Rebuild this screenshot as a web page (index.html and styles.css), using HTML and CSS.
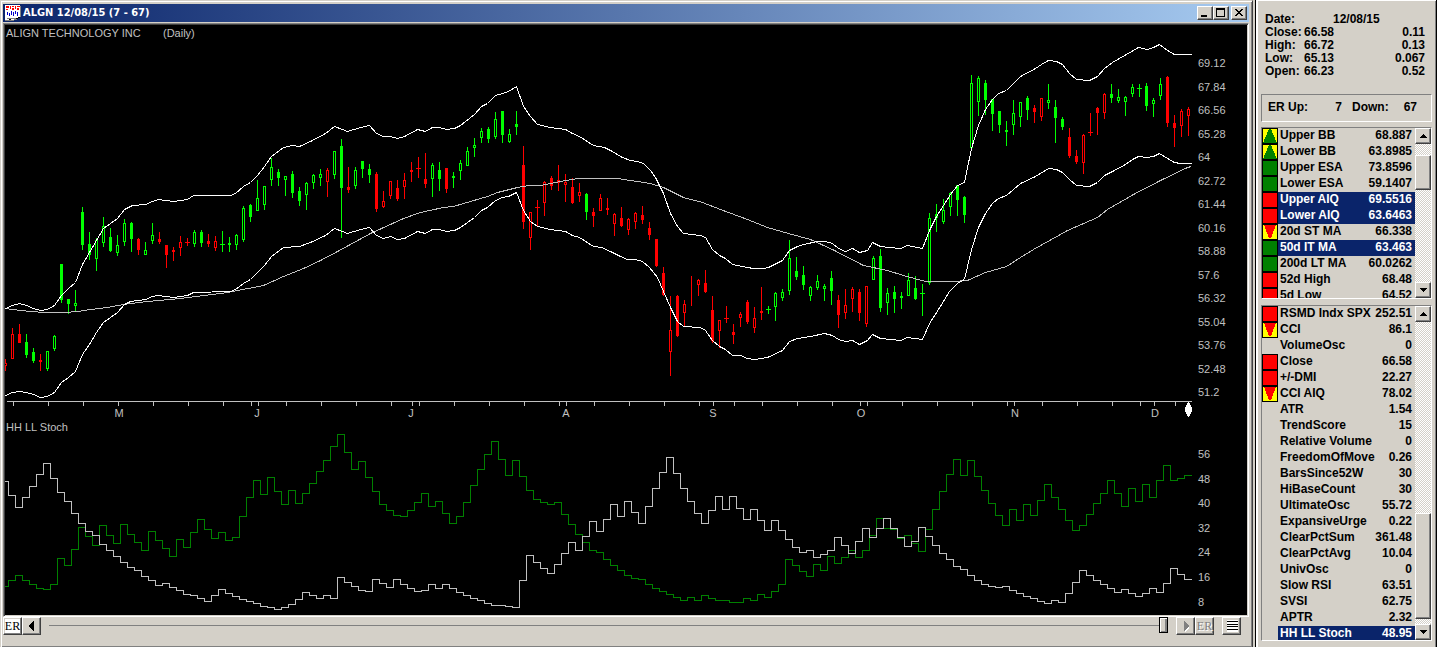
FILE: index.html
```html
<!DOCTYPE html>
<html lang="en">
<head>
<meta charset="utf-8">
<title>ALGN 12/08/15 (7 - 67)</title>
<link rel="stylesheet" href="styles.css">
</head>
<body>
<main class="window">
  <header class="titlebar">
    <svg class="app-icon" viewBox="0 0 16 16" aria-hidden="true">
      <path d="M0 0h15v13h-3l-2 2H0z" fill="#fff"/>
      <path d="M15 1h1v11h-1zM2 13h9v1H2zM9 14h3v1H9zM0 15h9v1H0z" fill="#808080"/>
      <path d="M1 1h3v2H1zM5 1h1v3H5zM7 1h2v1H7zM10 1h1v3h-1zM12 1h3v1h-3zM1 4h2v1H1zM7 3h2v2H7zM12 3h2v2h-2z" fill="#f00"/>
      <path d="M2 7h1v3H2zM4 8h1v3H4zM6 6h1v4H6zM8 7h1v4H8zM10 6h1v3h-1zM12 7h1v4h-1z" fill="#00c"/>
      <path d="M13 12h2v1h-2zM11 13h2v1h-2zM4 14h2v1H4z" fill="#000"/>
    </svg>
    <h1 class="title">ALGN 12/08/15 (7 - 67)</h1>
    <div class="caption-buttons">
      <button class="caption" aria-label="Minimize"><svg viewBox="0 0 12 10"><path d="M2 7h6v2H2z"/></svg></button>
      <button class="caption" aria-label="Maximize"><svg viewBox="0 0 12 10"><path d="M1 0h9v9H1zM2 2v6h7V2z" fill-rule="evenodd"/></svg></button>
      <button class="caption caption-close" aria-label="Close"><svg viewBox="0 0 12 10"><path d="M2 1h2v1h1v1h2V2h1V1h2v1H9v1H8v1H7v1h1v1h1v1h1v1H8V7H7V6H5v1H4v1H2V7h1V6h1V5h1V4H4V3H3V2H2z"/></svg></button>
    </div>
  </header>

  <section class="chart" aria-label="Price chart">
    <svg id="plot" class="plot" viewBox="5 25 1242 590" preserveAspectRatio="xMinYMin meet">
      <g id="candles" class="crisp"></g>
      <g id="averages" class="crisp"></g>
      <g id="stoch" class="crisp"></g>
      <g id="axis" class="axis crisp"></g>
      <path class="marker crisp" d="M1188 402h1l3 6v3l-3 6h-1l-3-6v-3z"/>
      <text class="label" x="6" y="37">ALIGN TECHNOLOGY INC</text>
      <text class="label" x="163" y="37">(Daily)</text>
      <text class="label" x="6" y="431">HH LL Stoch</text>
    </svg>
  </section>

  <footer class="toolbar">
    <button class="tool"><span class="er">ER</span></button>
    <button class="tool" aria-label="Previous"><svg viewBox="0 0 14 14"><path d="M4 6h1V5h1V4h1V3h1V2h1v10H8v-1H7v-1H6V9H5V8H4z"/></svg></button>
    <input class="slider" type="range" min="0" max="169" value="169" aria-label="Chart date">
    <button class="tool" aria-label="Next" disabled><svg viewBox="0 0 14 14"><path d="M6 3v10l1-1 1-1 1-1 1-1V8z" fill="#fff"/><path d="M5 2v10h1v-1h1v-1h1V9h1V8h1V6H9V5H8V4H7V3H6V2z" fill="#808080"/></svg></button>
    <button class="tool" disabled><span class="er er-off">ER</span></button>
    <button class="tool tool-list" aria-label="List"><svg viewBox="0 0 14 14"><path d="M2 1h11v12H2z" fill="#fff"/><path d="M2 2h11v1H2zM2 5h11v1H2zM2 7h11v1H2zM2 10h11v1H2z"/></svg></button>
  </footer>
</main>

<aside class="side">
  <table class="quote">
    <tr><th>Date:</th><td class="quote-date" colspan="2">12/08/15</td></tr>
    <tr><th>Close:</th><td>66.58</td><td class="num">0.11</td></tr>
    <tr><th>High:</th><td>66.72</td><td class="num">0.13</td></tr>
    <tr><th>Low:</th><td>65.13</td><td class="num">0.067</td></tr>
    <tr><th>Open:</th><td>66.23</td><td class="num">0.52</td></tr>
  </table>

  <div class="rating">
    <span>ER Up:</span><span class="rating-up">7</span>
    <span class="rating-name">Down:</span><span class="rating-down">67</span>
  </div>

  <section class="list list-short" aria-label="Price indicators">
    <div class="list-view"><table class="rows" id="price-list"></table></div>
    <div class="scrollbar">
      <button class="scroll-arrow" aria-label="Scroll up"><svg viewBox="0 0 12 12"><path d="M6 4h1v1h1v1h1v1h1v1H3V7h1V6h1V5h1z"/></svg></button>
      <div class="scroll-track"><div class="scroll-thumb thumb-top"></div></div>
      <button class="scroll-arrow" aria-label="Scroll down"><svg viewBox="0 0 12 12"><path d="M3 4h7v1H9v1H8v1H7v1H6V7H5V6H4V5H3z"/></svg></button>
    </div>
  </section>

  <section class="list list-long" aria-label="Technical indicators">
    <div class="list-view"><table class="rows" id="tech-list"></table></div>
    <div class="scrollbar">
      <button class="scroll-arrow" aria-label="Scroll up"><svg viewBox="0 0 12 12"><path d="M6 4h1v1h1v1h1v1h1v1H3V7h1V6h1V5h1z"/></svg></button>
      <div class="scroll-track"><div class="scroll-thumb thumb-bottom"></div></div>
      <button class="scroll-arrow" aria-label="Scroll down"><svg viewBox="0 0 12 12"><path d="M3 4h7v1H9v1H8v1H7v1H6V7H5V6H4V5H3z"/></svg></button>
    </div>
  </section>
</aside>
<script src="chart.js"></script>
</body>
</html>
```
FILE: styles.css
```css
* { box-sizing: border-box; }

body {
  margin: 0;
  min-height: 100vh;
  display: flex;
  background: #d4d0c8;
  color: #000;
  font: 12px/16px "Liberation Sans", Arial, sans-serif;
}

button {
  margin: 0;
  padding: 0;
  border: 1px solid;
  border-color: #fff #404040 #404040 #fff;
  box-shadow: inset -1px -1px #808080;
  background: #d4d0c8;
  font: inherit;
  display: flex;
  align-items: center;
  justify-content: center;
}

svg { display: block; shape-rendering: crispEdges; }

/* Chart window */
.window {
  flex: 1;
  min-width: 0;
  display: flex;
  flex-direction: column;
  padding: 2px 2px 0 2px;
  border: 1px solid;
  border-color: #d4d0c8 #404040 #404040 #d4d0c8;
  box-shadow: inset 1px 1px #fff, inset -1px -1px #808080;
}

.titlebar {
  display: flex;
  align-items: center;
  height: 18px;
  margin: 1px 1px 0 0;
  padding: 0 2px;
  background: linear-gradient(to right, #0a246a, #a6caf0);
}

.app-icon { width: 16px; height: 16px; }

.title {
  flex: 1;
  margin: 0 0 0 2px;
  color: #fff;
  font: bold 11px/18px "DejaVu Sans Condensed", Tahoma, sans-serif;
}

.caption-buttons { display: flex; }
.caption { width: 16px; height: 14px; }
.caption svg { width: 12px; height: 10px; }
.caption-close { margin-left: 2px; }

.chart {
  flex: 1;
  min-height: 0;
  margin: 1px 1px 0 0;
  border: 1px solid;
  border-color: #808080 #fff #fff #808080;
  box-shadow: inset 1px 1px #404040, inset -1px -1px #d4d0c8;
  padding: 1px;
  background: #000;
}

.plot { width: 100%; height: 100%; }
.plot .crisp { shape-rendering: crispEdges; }
.label { fill: #c0c0c0; font-size: 11px; }
.label-mid { text-anchor: middle; }
.axis path { stroke: #c0c0c0; fill: none; }
.marker { fill: #fff; }
.band, .average, .step { fill: none; stroke-width: 1; }
.band { stroke: #fff; }
.average { stroke: #c0c0c0; }
.step-low { stroke: #c0c0c0; }
.step-high { stroke: #008000; }
.bar-g { fill: #0f0; stroke: none; }
.bar-r { fill: #f00; stroke: none; }
.hollow { fill: #000; stroke-width: 1; }
.hollow-g { stroke: #0f0; }
.hollow-r { stroke: #f00; }

/* Bottom controls */
.toolbar {
  flex: none;
  display: flex;
  align-items: flex-start;
  height: 30px;
  padding-right: 9px;
}

.tool { width: 19px; height: 18px; flex: none; }
.tool svg { width: 14px; height: 14px; }
.tool-list { margin-left: 8px; }
.er { font: 12px/14px "Liberation Serif", serif; background: #fff; color: #000; }
.er-off { background: none; color: #808080; text-shadow: 1px 1px #fff; }

.slider {
  -webkit-appearance: none;
  appearance: none;
  flex: 1;
  min-width: 0;
  height: 16px;
  margin: 0 8px;
  background: linear-gradient(#808080, #808080) center / 100% 1px no-repeat;
}

.slider::-webkit-slider-thumb {
  -webkit-appearance: none;
  appearance: none;
  width: 9px;
  height: 16px;
  border: 1px solid #000;
  box-shadow: inset 1px 1px #fff, inset -2px -1px #808080;
  background: #d4d0c8;
}

/* Side panel */
.side {
  flex: none;
  width: 182px;
  margin-left: 2px;
  padding: 13px 4px 0 4px;
  border: solid #000;
  border-width: 0 1px;
  box-shadow: inset 2px 1px #fff, inset -1px -1px #808080;
  font-weight: bold;
}

table { border-collapse: collapse; border-spacing: 0; width: 100%; }
td, th { padding: 0; text-align: left; }

.quote { line-height: 13px; margin-left: 5px; width: 160px; }
.quote th { width: 39px; }
.quote .quote-date { padding-left: 29px; }
.num { text-align: right; }

.rating {
  display: flex;
  height: 28px;
  margin: 16px 0 5px 1px;
  padding: 4px 14px 0 6px;
  border: 1px solid;
  border-color: #808080 #fff #fff #808080;
}

.rating-up { width: 34px; text-align: right; }
.rating-name { margin-left: 10px; }
.rating-down { flex: 1; text-align: right; }

.list {
  display: flex;
  margin: 0 0 6px 1px;
  border: 1px solid;
  border-color: #808080 #fff #fff #808080;
}

.list-short { height: 172px; }
.list-long { height: 336px; }
.list-view { flex: 1; min-width: 0; overflow: hidden; }
.rows td { height: 16px; line-height: 14px; white-space: nowrap; vertical-align: top; }
.rows .cell-signal { width: 16px; }
.rows .cell-name { width: 100%; max-width: 0; padding-left: 2px; overflow: hidden; }
.rows .cell-value { padding-right: 3px; text-align: right; }
.selected .cell-name, .selected .cell-value { background: #0a246a; color: #fff; }
.signal { width: 16px; height: 16px; }

.scrollbar { flex: none; width: 16px; display: flex; flex-direction: column; }
.scroll-arrow { width: 16px; height: 16px; flex: none; }
.scroll-arrow svg { width: 12px; height: 12px; }

.scroll-track {
  flex: 1;
  display: flex;
  flex-direction: column;
  background: repeating-conic-gradient(#fff 0 25%, #d4d0c8 0 50%) 0 0 / 2px 2px;
}

.scroll-thumb {
  border: 1px solid;
  border-color: #fff #404040 #404040 #fff;
  box-shadow: inset -1px -1px #808080;
  background: #d4d0c8;
}

.thumb-top { height: 35px; margin-top: 11px; }
.thumb-bottom { height: 106px; margin: auto 0 5px; }
```
FILE: chart.js
```js
const STEP = 7;
const FIRST = 5;
const NS = "http://www.w3.org/2000/svg";

// high, body top, body bottom, low, colour (capital letter = filled body)
const candles = `
359 363 366 371 r,328 334 359 359 r,324 334 343 343 R,334 342 355 358 G,348 352 361 363 G,354 360 362 371 R,351 351 369 371 g,335 336 349 351 g,264 264 300 303 G,299 299 304 314 G,
290 303 306 311 g,207 212 245 250 G,232 244 255 260 G,238 240 259 271 g,217 226 243 247 g,228 237 251 252 G,235 245 253 256 g,219 223 242 246 g,222 223 239 252 G,238 239 250 255 R,
242 250 255 255 g,223 235 241 244 g,232 239 242 244 R,245 245 255 268 R,247 250 252 261 R,236 242 248 256 r,238 242 243 246 R,230 232 244 247 g,230 232 243 247 G,234 241 244 247 R,
236 241 248 251 r,231 244 245 252 G,237 243 245 252 G,234 235 245 250 g,206 208 240 242 g,204 205 217 222 G,180 198 211 211 g,186 186 205 210 g,158 167 180 186 g,169 172 178 186 G,
176 176 180 196 g,171 174 193 198 G,187 191 201 206 G,182 183 195 210 g,174 175 183 189 g,169 174 178 186 g,168 170 182 197 r,151 151 175 179 g,139 146 188 238 G,167 187 190 193 R,
167 170 186 189 g,161 161 169 178 G,164 169 175 183 G,172 174 209 212 R,191 201 207 208 r,181 181 196 199 r,180 188 199 201 R,173 180 187 199 r,162 170 172 182 R,157 168 169 178 R,
153 179 184 188 R,163 165 179 197 g,162 170 179 191 G,168 168 189 193 R,172 176 178 188 G,160 163 171 180 g,147 151 166 166 g,138 145 148 157 g,128 131 138 143 g,127 129 139 143 G,
112 119 137 139 g,111 111 135 143 G,129 134 142 143 g,111 124 127 135 G,146 165 222 229 R,212 212 238 250 r,200 207 208 226 R,181 182 203 216 r,176 178 186 190 R,165 180 183 191 R,
174 182 185 202 r,178 187 203 204 R,183 192 196 202 r,193 194 212 220 G,208 212 216 227 R,194 198 211 211 r,198 208 210 215 R,213 214 224 236 r,207 218 226 227 R,218 219 230 235 r,
212 213 222 229 r,206 215 220 224 R,222 228 235 240 R,239 239 266 267 R,267 273 295 296 R,296 330 352 376 r,295 296 336 337 R,300 304 313 326 r,276 276 276 306 R,279 280 285 296 r,
270 283 292 293 R,296 310 341 343 R,320 320 331 348 r,306 318 319 323 R,324 332 335 344 R,312 314 318 327 r,300 302 322 324 R,307 318 328 333 r,287 311 313 320 R,306 309 310 314 G,
292 293 307 321 g,289 292 298 301 g,240 258 291 295 g,257 271 277 280 G,266 275 285 290 G,286 287 296 301 g,275 281 288 290 g,284 286 289 301 g,271 278 291 305 G,295 300 315 328 R,
289 305 313 319 r,287 289 299 312 r,289 292 313 321 R,286 286 324 327 r,256 258 280 280 g,249 256 308 312 G,288 293 303 315 g,286 292 299 313 G,292 296 298 309 G,273 280 296 296 g,
276 288 299 300 G,284 293 294 316 G,213 218 283 285 g,204 214 218 232 G,199 210 222 224 g,192 193 207 216 g,185 185 200 216 G,196 197 215 223 G,75 83 148 148 g,76 78 102 116 g,
80 83 100 115 G,99 99 114 131 G,111 111 125 133 G,121 130 132 146 G,100 113 125 135 g,102 102 117 127 g,96 98 110 120 G,105 108 112 123 R,98 98 117 121 r,84 100 103 109 g,
100 107 118 143 G,117 119 127 130 G,128 137 156 158 R,150 156 162 164 R,134 135 163 174 r,113 132 133 136 R,107 108 113 135 R,93 94 113 119 r,84 94 98 103 G,89 97 101 103 g,
96 97 102 116 g,84 87 94 97 g,84 88 89 97 G,83 86 106 111 G,98 100 104 117 g,78 84 96 100 g,76 77 123 127 R,115 123 128 147 R,109 111 126 137 r,107 109 116 136 r`;

const upper = "5,308 12,305 19,303 26,305 33,308 40,310 47,309 54,305 61,295 68,288 75,282 82,264 89,252 96,240 103,228 110,223 117,218 124,209 132,205 145,204 152,201 158,199 173,201 187,199 193,195 230,195 235,193 243,186 250,182 257,175 264,166 271,156 283,147 292,145 299,146 310,141 325,133 334,126 347,131 360,127 369,125 376,133 383,136 390,136 397,138 404,136 417,129 425,131 432,127 439,127 446,129 454,128 460,125 474,114 481,106 487,103 495,95 502,93 508,91 516,86 523,106 530,116 537,124 550,127 565,129 572,133 579,136 593,145 604,147 610,150 622,157 630,160 637,161 643,163 650,170 655,177 663,193 670,213 677,226 683,233 700,235 705,237 712,249 719,255 725,258 732,264 747,267 753,268 763,268 768,267 782,260 789,250 797,246 803,244 817,241 825,241 832,243 838,248 845,251 852,248 859,252 867,250 872,242 880,246 888,247 900,248 907,245 922,248 929,230 936,216 943,205 950,194 957,185 964,182 971,148 978,125 985,109 992,99 998,93 1006,90 1020,76 1035,68 1041,64 1048,60 1056,61 1062,64 1069,73 1076,79 1089,80 1097,76 1104,68 1112,62 1138,47 1147,49 1153,47 1159,44 1167,50 1174,54 1191,54";
const lower = "5,395 12,392 19,391 26,392 33,394 40,397 47,396 54,392 61,382 68,377 75,371 82,354 89,344 96,332 103,322 117,312 124,304 130,301 145,299 152,296 158,295 173,297 187,295 193,292 230,291 235,289 243,283 250,279 264,265 271,256 283,247 299,246 310,242 325,235 334,228 347,233 360,229 369,227 376,235 383,238 390,236 397,239 404,238 417,231 425,233 432,229 439,229 446,231 454,230 460,227 474,217 481,210 487,207 495,200 502,197 508,196 516,192 523,210 530,221 537,226 550,229 565,231 572,235 579,237 593,246 601,247 610,251 620,256 627,259 635,259 642,261 649,267 657,277 663,291 670,307 677,321 683,326 700,327 705,330 712,340 719,346 725,349 732,355 740,355 747,358 754,359 767,357 782,350 789,341 797,338 810,336 824,333 832,335 838,339 845,341 852,340 859,344 867,340 872,334 880,338 900,340 907,337 922,339 929,323 938,309 949,291 957,283 964,279 971,249 978,227 985,213 992,203 998,198 1006,195 1020,183 1035,176 1048,168 1056,169 1062,172 1069,179 1076,185 1089,186 1097,182 1104,175 1112,171 1125,164 1132,159 1138,156 1147,157 1153,156 1159,153 1167,158 1174,162 1180,163 1191,163";
const average = "5,308 20,310 43,312 63,312 78,311 90,309 107,307 123,304 147,301 180,298 227,292 263,285 283,276 303,268 320,260 337,251 370,233 403,218 420,212 443,207 453,206 487,196 497,192 517,187 528,185 540,185 560,181 577,178 617,178 630,180 650,183 663,187 683,197 702,202 720,209 747,219 767,227 788,233 810,239 832,249 863,265 887,270 903,275 925,281 953,281 967,280 985,272 1006,266 1020,257 1033,249 1067,230 1097,217 1107,209 1133,194 1160,180 1187,167 1191,166";

// oscillator levels, in thirds of a pixel below the panel top
const stochTop = 415;
const stochLow = [199,241,277,247,214,178,145,190,232,259,295,325,349,361,388,406,424,442,457,466,484,496,511,505,517,526,538,541,550,559,541,523,535,544,553,559,565,574,577,583,577,568,553,532,541,550,541,550,487,502,514,526,529,493,505,517,493,508,520,529,526,508,520,508,520,532,541,550,556,565,571,571,574,577,496,421,442,460,475,448,415,382,406,364,319,349,313,268,304,259,292,325,274,220,172,127,175,220,259,295,325,286,244,283,244,280,313,283,316,346,316,346,373,397,412,406,427,418,406,367,391,415,379,340,367,340,310,340,367,394,379,337,364,391,415,433,454,463,481,496,508,514,517,514,526,535,544,550,559,565,556,562,535,502,466,481,496,508,520,532,523,535,544,535,520,532,505,460,478,493];
const stochHigh = [514,496,481,496,508,520,523,508,430,451,403,337,364,391,331,361,385,328,358,382,406,349,376,400,424,373,397,352,313,343,370,352,376,367,304,247,196,238,187,229,268,226,265,235,205,169,136,94,58,112,163,139,187,229,268,286,301,304,286,262,235,274,259,295,325,304,262,211,163,118,79,133,181,136,184,226,253,262,268,262,298,328,358,382,406,412,433,451,466,481,490,493,508,520,529,538,547,556,547,556,541,550,556,556,562,562,550,556,538,547,529,508,433,451,469,484,448,466,424,445,427,406,427,406,361,310,340,343,370,361,385,409,343,283,229,178,133,181,136,184,226,265,301,331,283,316,268,301,256,208,247,283,316,346,331,298,265,235,196,235,274,220,259,208,247,196,151,196,190,181];

const ticks = [13,48,83,118,153,188,223,251,258,286,321,356,391,412,419,454,489,524,559,566,594,629,664,699,713,734,762,797,832,860,867,902,937,972,1007,1014,1042,1077,1112,1140,1154,1175];
const months = [["M",119],["J",257],["J",411],["A",566],["S",713],["O",861],["N",1015],["D",1155]];
const prices = ["69.12","67.84","66.56","65.28","64","62.72","61.44","60.16","58.88","57.6","56.32","55.04","53.76","52.48","51.2"];
const levels = [56, 48, 40, 32, 24, 16, 8];

function add(parent, tag, attrs, text) {
  const el = document.createElementNS(NS, tag);
  for (const key in attrs) el.setAttribute(key, attrs[key]);
  if (text !== undefined) el.textContent = text;
  parent.appendChild(el);
  return el;
}
const byId = (id) => document.getElementById(id);

candles.trim().split(",").forEach((row, i) => {
  const [high, top, bottom, low, kind] = row.trim().split(" ");
  const x = FIRST + i * STEP;
  const colour = kind.toLowerCase();
  const g = byId("candles");
  add(g, "rect", { class: "bar-" + colour, x, y: high, width: 1, height: low - high });
  if (kind === colour && bottom - top > 2) {
    add(g, "rect", { class: "hollow hollow-" + colour, x: x - 0.5, y: +top + 0.5, width: 2, height: bottom - top - 1 });
  } else {
    const flat = bottom - top === 1;
    add(g, "rect", { class: "bar-" + colour, x: flat ? x - 2 : x - 1, y: top, width: flat ? 5 : 3, height: bottom - top });
  }
});

const averages = byId("averages");
add(averages, "polyline", { class: "average", points: average, transform: "translate(0.5 0.5)" });
add(averages, "polyline", { class: "band", points: upper, transform: "translate(0.5 0.5)" });
add(averages, "polyline", { class: "band", points: lower, transform: "translate(0.5 0.5)" });

function stepPath(values) {
  return values.map((v, i) => {
    const y = stochTop + Math.floor(v / 3) + 0.5;
    const x = i * STEP + 1.5;
    return (i ? "V" + y : "M5 " + y) + "H" + (x + STEP);
  }).join("");
}
add(byId("stoch"), "path", { class: "step step-high", d: stepPath(stochHigh) });
add(byId("stoch"), "path", { class: "step step-low", d: stepPath(stochLow) });

add(byId("axis"), "path", { d: "M7 401.5H1192" + ticks.map((x) => `M${x}.5 402v4`).join("") });
const plot = byId("plot");
months.forEach(([name, x]) => add(plot, "text", { class: "label label-mid", x, y: 417 }, name));
prices.forEach((p, i) => add(plot, "text", { class: "label", x: 1198, y: Math.round(67 + i * 23.5) }, p));
levels.forEach((p, i) => add(plot, "text", { class: "label", x: 1198, y: Math.round(458 + i * 24.6) }, p));

// name, value, signal, selected
const priceRows = [
  ["Upper BB", "68.887", "up"], ["Lower BB", "63.8985", "up"], ["Upper ESA", "73.8596", "green"],
  ["Lower ESA", "59.1407", "green"], ["Upper AIQ", "69.5516", "red", true], ["Lower AIQ", "63.6463", "red", true],
  ["20d ST MA", "66.338", "down"], ["50d IT MA", "63.463", "green", true], ["200d LT MA", "60.0262", "green"],
  ["52d High", "68.48", "red"], ["5d Low", "64.52", "red"]
];
const techRows = [
  ["RSMD Indx SPX", "252.51", "red"], ["CCI", "86.1", "down"], ["VolumeOsc", "0"], ["Close", "66.58", "red"],
  ["+/-DMI", "22.27", "red"], ["CCI AIQ", "78.02", "down"], ["ATR", "1.54"], ["TrendScore", "15"],
  ["Relative Volume", "0"], ["FreedomOfMove", "0.26"], ["BarsSince52W", "30"], ["HiBaseCount", "30"],
  ["UltimateOsc", "55.72"], ["ExpansiveUrge", "0.22"], ["ClearPctSum", "361.48"], ["ClearPctAvg", "10.04"],
  ["UnivOsc", "0"], ["Slow RSI", "63.51"], ["SVSI", "62.75"], ["APTR", "2.32"], ["HH LL Stoch", "48.95", "", true]
];
const signals = {
  green: ["#008000", ""],
  red: ["#f00", ""],
  up: ["#ff0", '<path d="M7 1h2l6 14H1z" fill="#008000"/>'],
  down: ["#ff0", '<path d="M2 1h12L9 14H7z" fill="#f00"/>']
};

function fill(id, rows) {
  byId(id).innerHTML = rows.map(([name, value, signal, selected]) => {
    const s = signals[signal];
    const icon = s ? `<svg class="signal" viewBox="0 0 16 16"><path d="M0 0h16v16H0z"/><path d="M1 1h14v14H1z" fill="${s[0]}"/>${s[1]}</svg>` : "";
    return `<tr class="${selected ? "selected" : ""}"><td class="cell-signal">${icon}</td><td class="cell-name">${name}</td><td class="cell-value">${value}</td></tr>`;
  }).join("");
}
fill("price-list", priceRows);
fill("tech-list", techRows);
```
